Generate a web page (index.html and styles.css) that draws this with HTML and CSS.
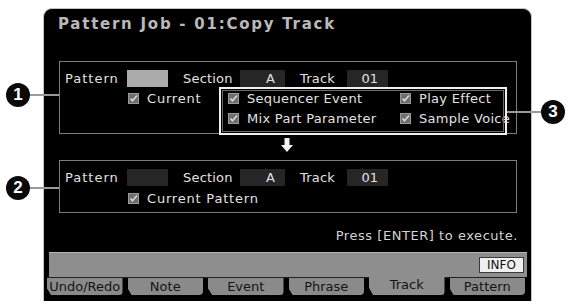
FILE: index.html
```html
<!DOCTYPE html>
<html lang="en">
<head>
    <meta charset="UTF-8">
    <title>Pattern Job - Copy Track</title>
    <link rel="stylesheet" href="styles.css">
</head>
<body>

    <div class="page">
        <div class="screen">
            <div class="title">Pattern Job - 01:Copy Track</div>

            <div class="box source">
                <div class="row">
                    <span class="label">Pattern</span>
                    <span class="field light"></span>
                    <span class="label section">Section</span>
                    <span class="field wide">A</span>
                    <span class="label track">Track</span>
                    <span class="field">01</span>
                </div>
                <div class="row options">
                    <div class="current">
                        <span class="check"><svg viewBox="0 0 11 11"><rect x="0.5" y="0.5" width="10" height="10" fill="#6e6e6e" stroke="#9a9a9a"/><path d="M2.5 5.5 L4.5 7.8 L9 2.5" fill="none" stroke="#d8d8d8" stroke-width="1.6"/></svg></span>
                        Current
                    </div>
                    <div class="data-types">
                        <div class="item"><span class="check"><svg viewBox="0 0 11 11"><rect x="0.5" y="0.5" width="10" height="10" fill="#6e6e6e" stroke="#9a9a9a"/><path d="M2.5 5.5 L4.5 7.8 L9 2.5" fill="none" stroke="#d8d8d8" stroke-width="1.6"/></svg></span>Sequencer Event</div>
                        <div class="item"><span class="check"><svg viewBox="0 0 11 11"><rect x="0.5" y="0.5" width="10" height="10" fill="#6e6e6e" stroke="#9a9a9a"/><path d="M2.5 5.5 L4.5 7.8 L9 2.5" fill="none" stroke="#d8d8d8" stroke-width="1.6"/></svg></span>Play Effect</div>
                        <div class="item"><span class="check"><svg viewBox="0 0 11 11"><rect x="0.5" y="0.5" width="10" height="10" fill="#6e6e6e" stroke="#9a9a9a"/><path d="M2.5 5.5 L4.5 7.8 L9 2.5" fill="none" stroke="#d8d8d8" stroke-width="1.6"/></svg></span>Mix Part Parameter</div>
                        <div class="item"><span class="check"><svg viewBox="0 0 11 11"><rect x="0.5" y="0.5" width="10" height="10" fill="#6e6e6e" stroke="#9a9a9a"/><path d="M2.5 5.5 L4.5 7.8 L9 2.5" fill="none" stroke="#d8d8d8" stroke-width="1.6"/></svg></span>Sample Voice</div>
                    </div>
                </div>
            </div>

            <div class="arrow">
                <svg viewBox="0 0 12 14" width="12" height="14"><path d="M3.5 0 H8.5 V7 H12 L6 14 L0 7 H3.5 Z" fill="#f2f2f2"/></svg>
            </div>

            <div class="box dest">
                <div class="row">
                    <span class="label">Pattern</span>
                    <span class="field"></span>
                    <span class="label section">Section</span>
                    <span class="field wide">A</span>
                    <span class="label track">Track</span>
                    <span class="field">01</span>
                </div>
                <div class="row">
                    <div class="current">
                        <span class="check"><svg viewBox="0 0 11 11"><rect x="0.5" y="0.5" width="10" height="10" fill="#6e6e6e" stroke="#9a9a9a"/><path d="M2.5 5.5 L4.5 7.8 L9 2.5" fill="none" stroke="#d8d8d8" stroke-width="1.6"/></svg></span>
                        Current Pattern
                    </div>
                </div>
            </div>

            <div class="hint">Press [ENTER] to execute.</div>

            <div class="band">
                <span class="info">INFO</span>
            </div>
            <div class="tabs">
                <span class="tab">Undo/Redo</span>
                <span class="tab">Note</span>
                <span class="tab">Event</span>
                <span class="tab">Phrase</span>
                <span class="tab active">Track</span>
                <span class="tab">Pattern</span>
            </div>
        </div>

        <div class="callout c1"><span class="num">1</span></div>
        <div class="callout c2"><span class="num">2</span></div>
        <div class="callout c3"><span class="num">3</span></div>
    </div>

</body>
</html>
```

FILE: styles.css
```css
body {
    margin: 0;
    background-color: #fff;
    font-family: "DejaVu Sans", sans-serif;
}

.page {
    position: relative;
    width: 575px;
    height: 306px;
    overflow: hidden;
}

.screen {
    margin: 8px 0 0 43px;
    width: 487px;
    height: 292px;
    background-color: #000;
    border: 1px solid #c4c4c4;
    border-bottom: none;
    border-radius: 9px 9px 0 0;
    display: flex;
    flex-direction: column;
    color: #e2e2e2;
    font-size: 13px;
}

.title {
    margin: 6px 0 0 14px;
    height: 18px;
    line-height: 18px;
    font-size: 15px;
    font-weight: bold;
    letter-spacing: 1.75px;
    color: #b9b9b9;
}

.box {
    margin-left: 15px;
    width: 456px;
    border: 1px solid #7c7c7c;
}

.source {
    margin-top: 28px;
    height: 71px;
}

.dest {
    height: 51px;
}

.row {
    display: flex;
    align-items: center;
    height: 17px;
    line-height: 17px;
}

.row:first-child {
    margin-top: 8px;
}

.label {
    padding-left: 5px;
    width: 67px;
    box-sizing: border-box;
    letter-spacing: 1px;
}

.label.section {
    margin-left: 15px;
    width: 57px;
    padding-left: 0;
    letter-spacing: 0.2px;
}

.label.track {
    margin-left: 15px;
    width: 47px;
    padding-left: 0;
    letter-spacing: 0.2px;
}

.field {
    width: 41px;
    height: 17px;
    background-color: #262626;
    text-align: right;
    padding-right: 10px;
    box-sizing: border-box;
}

.field.light {
    background-color: #ababab;
}

.field.wide {
    width: 45px;
}

.options {
    height: auto;
    align-items: flex-start;
}

.current {
    display: flex;
    align-items: center;
    margin: 2px 0 0 68px;
    height: 18px;
    width: 91px;
    letter-spacing: 0.8px;
}

.dest .current {
    width: auto;
}

.check {
    display: inline-flex;
    width: 11px;
    height: 11px;
    margin-right: 8px;
}

.check svg {
    width: 11px;
    height: 11px;
}

.data-types {
    height: 41px;
    border: 2px solid #f0f0f0;
    outline: 1px solid #6a6a6a;
    outline-offset: -4px;
    display: grid;
    grid-template-columns: 172px 1fr;
    grid-auto-rows: 18px;
    row-gap: 2px;
    padding: 0 0 3px 7px;
    width: 277px;
}

.item {
    display: flex;
    align-items: center;
    white-space: nowrap;
    letter-spacing: 0.3px;
}

.arrow {
    height: 26px;
    display: flex;
    justify-content: center;
    align-items: center;
    width: 487px;
    margin-left: -1px;
}

.arrow svg {
    margin-top: -4px;
}

.dest .row:last-child {
    height: 18px;
    margin-top: 2px;
}

.hint {
    margin: 15px 0 0 15px;
    width: 459px;
    text-align: right;
    line-height: 16px;
    height: 16px;
    color: #d4d4d4;
    letter-spacing: 0.55px;
}

.band {
    margin: 8px 4px 0 5px;
    height: 24px;
    background-color: #8e8e8e;
    border-top: 1px solid #b4b4b4;
    display: flex;
    justify-content: flex-end;
    align-items: flex-start;
    padding-right: 3px;
}

.info {
    margin-top: 4px;
    width: 43px;
    height: 14px;
    line-height: 14px;
    background-color: #f0f0f0;
    border: 1px solid #3a3a3a;
    color: #111;
    font-size: 12px;
    text-align: center;
}

.tabs {
    display: grid;
    grid-template-columns: repeat(6, 1fr);
    column-gap: 5px;
    margin: 0 6px 0 3px;
    border-top: 1px solid #222;
    height: 17px;
}

.tab {
    background-color: #8a8a8a;
    color: #141414;
    text-align: center;
    line-height: 17px;
    font-size: 13px;
    border-radius: 0 0 4px 4px;
    clip-path: polygon(0 0, 100% 0, 100% 100%, 4px 100%, 0 60%);
}

.tab.active {
    background-color: #8e8e8e;
    margin-top: -1px;
    line-height: 15px;
    height: 18px;
}

.callout {
    position: absolute;
    height: 2px;
    background-color: #9a9a9a;
}

.callout .num {
    position: absolute;
    top: -11px;
    width: 24px;
    height: 24px;
    border-radius: 50%;
    background-color: #0a0a0a;
    color: #fff;
    font-family: "Liberation Sans", Arial, sans-serif;
    font-weight: bold;
    font-size: 17px;
    line-height: 24px;
    text-align: center;
}

.c1 {
    left: 20px;
    top: 94px;
    width: 39px;
}

.c1 .num, .c2 .num {
    left: -14px;
}

.c2 {
    left: 20px;
    top: 187px;
    width: 39px;
}

.c3 {
    left: 507px;
    top: 111px;
    width: 44px;
}

.c3 .num {
    right: -14px;
}
```
